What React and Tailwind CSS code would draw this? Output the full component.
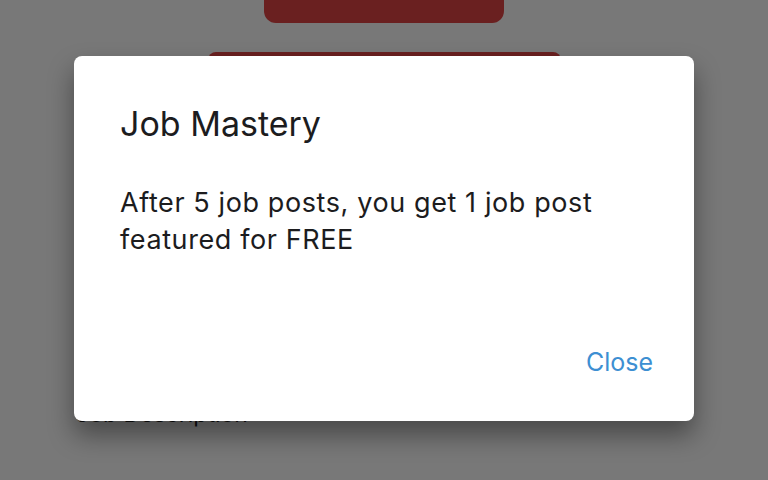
import React from 'react';

const font = { fontFamily: 'Inter, "Noto Sans", sans-serif' };

export default function App() {
    return (
        <div className="relative h-[480px] w-[768px] overflow-hidden bg-white" style={font}>
            {/* page behind the dialog */}
            <div className="flex flex-col items-center">
                <div className="-mt-[25px] h-[48px] w-[240px] rounded-[12px] bg-[#e24444]" />
                <div className="mt-[29px] h-[52px] w-[353px] rounded-[8px] bg-[#e24444]" />
                <div className="mt-[293px] w-full px-[76px] text-[23px] text-[#222]">Job Description</div>
            </div>

            {/* overlay */}
            <div className="absolute inset-0 flex justify-center bg-black/[0.53] pt-[56px]">
                <div className="flex h-[365px] w-[620px] flex-col rounded-[8px] bg-white pl-[46px] pr-[41px] pt-[48px] shadow-[0_14px_26px_rgba(0,0,0,0.4)]">
                    <h2 className="text-[34px] leading-[40px] font-normal text-[#1c1c1e]">Job Mastery</h2>
                    <p className="mt-[40px] text-[27px] leading-[37px] tracking-[0.6px] text-[#1c1c1e]">
                        After 5 job posts, you get 1 job post featured for FREE
                    </p>
                    <div className="mt-auto mb-[43px] flex justify-end">
                        <button className="text-[25px] leading-[32px] text-[#3d8fd2]">Close</button>
                    </div>
                </div>
            </div>
        </div>
    );
}
